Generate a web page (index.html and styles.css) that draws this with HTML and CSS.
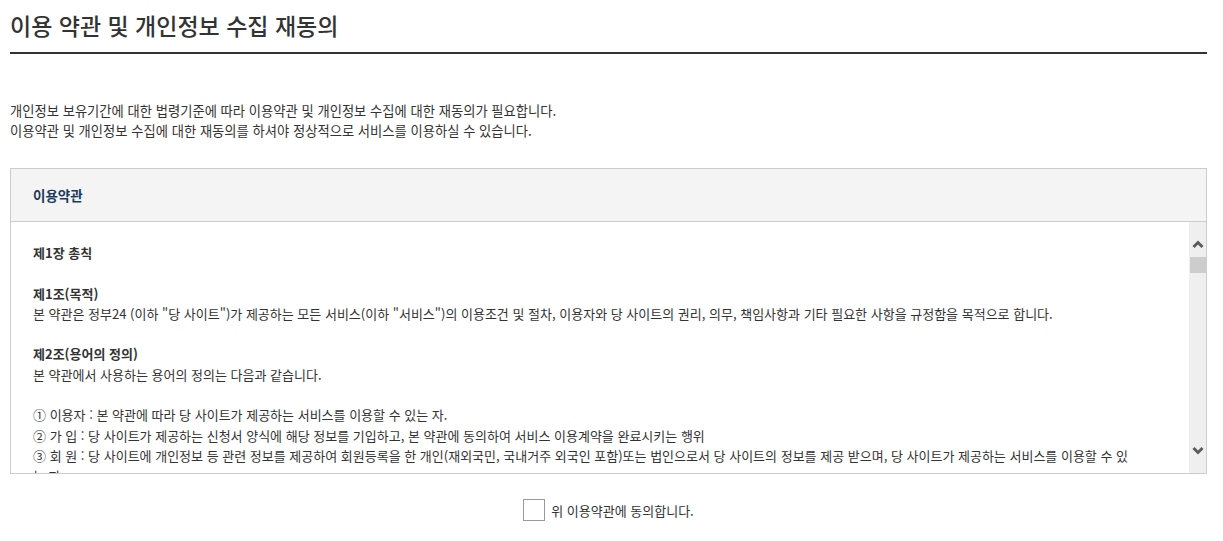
FILE: index.html
```html
<!DOCTYPE html>
<html lang="ko">
<head>
  <meta charset="UTF-8" />
  <meta name="viewport" content="width=device-width, initial-scale=1.0"/>
  <title>이용 약관 및 개인정보 수집 재동의</title>
  <link rel="stylesheet" href="styles.css">
</head>
<body>
  <div class="container">
    <h1 class="page-title">이용 약관 및 개인정보 수집 재동의</h1>

    <p class="intro">
      개인정보 보유기간에 대한 법령기준에 따라 이용약관 및 개인정보 수집에 대한 재동의가 필요합니다.<br>
      이용약관 및 개인정보 수집에 대한 재동의를 하셔야 정상적으로 서비스를 이용하실 수 있습니다.
    </p>

    <div class="terms-box">
      <div class="terms-head">이용약관</div>
      <div class="terms-body">
        <div class="terms-text">
          <p><strong>제1장 총칙</strong></p>
          <p>
            <strong>제1조(목적)</strong><br>
            본 약관은 정부24 (이하 "당 사이트")가 제공하는 모든 서비스(이하 "서비스")의 이용조건 및 절차, 이용자와 당 사이트의 권리, 의무, 책임사항과 기타 필요한 사항을 규정함을 목적으로 합니다.
          </p>
          <p>
            <strong>제2조(용어의 정의)</strong><br>
            본 약관에서 사용하는 용어의 정의는 다음과 같습니다.
          </p>
          <p>
            ① 이용자 : 본 약관에 따라 당 사이트가 제공하는 서비스를 이용할 수 있는 자.<br>
            ② 가 입 : 당 사이트가 제공하는 신청서 양식에 해당 정보를 기입하고, 본 약관에 동의하여 서비스 이용계약을 완료시키는 행위<br>
            ③ 회 원 : 당 사이트에 개인정보 등 관련 정보를 제공하여 회원등록을 한 개인(재외국민, 국내거주 외국인 포함)또는 법인으로서 당 사이트의 정보를 제공 받으며, 당 사이트가 제공하는 서비스를 이용할 수 있는 자.<br>
            ④ 비밀번호 : 이용자와 회원ID가 일치하는지를 확인하고 통신상의 자신의 비밀보호를 위하여 이용자 자신이 선정한 문자와 숫자의 조합.
          </p>
        </div>
        <div class="scrollbar">
          <svg class="scroll-arrow" width="12" height="10" viewBox="0 0 12 10"><polyline points="1.5,8 6,3.5 10.5,8" fill="none" stroke="#5c5c5c" stroke-width="3"/></svg>
          <div class="scroll-thumb"></div>
          <div class="scroll-track"></div>
          <svg class="scroll-arrow" width="12" height="10" viewBox="0 0 12 10"><polyline points="1.5,2 6,6.5 10.5,2" fill="none" stroke="#5c5c5c" stroke-width="3"/></svg>
        </div>
      </div>
    </div>

    <div class="agree">
      <input type="checkbox" id="agreeTerms" name="agreeTerms"/>
      <label for="agreeTerms">위 이용약관에 동의합니다.</label>
    </div>
  </div>
</body>
</html>
```

FILE: styles.css
```css
html, body {
  margin: 0;
  padding: 0;
  font-family: "Noto Sans CJK KR", "Noto Sans", sans-serif;
  color: #333;
  background-color: #ffffff;
}

.container {
  padding: 0 16px 0 10px;
}

.page-title {
  margin: 0;
  padding: 8px 0 10px;
  font-size: 23px;
  line-height: 34px;
  font-weight: 500;
  color: #333;
  border-bottom: 2px solid #333;
}

.intro {
  margin: 47px 0 27px;
  font-size: 13.3px;
  line-height: 20px;
}

.terms-box {
  border: 1px solid #cccccc;
}

.terms-head {
  height: 52px;
  line-height: 52px;
  padding-left: 22px;
  background-color: #f4f4f4;
  border-bottom: 1px solid #cccccc;
  font-size: 13.5px;
  font-weight: bold;
  color: #1d3a5c;
}

.terms-body {
  display: flex;
  height: 251px;
}

.terms-text {
  flex: 1;
  overflow: hidden;
  padding: 21px 52px 0 22px;
  font-size: 13px;
  line-height: 20.3px;
}

.terms-text p {
  margin: 0 0 20.3px;
}

.terms-text strong {
  font-weight: bold;
}

.scrollbar {
  width: 17px;
  background-color: #efefef;
  display: flex;
  flex-direction: column;
  align-items: center;
  padding: 17px 0;
  box-sizing: border-box;
}

.scroll-arrow {
  display: block;
  flex: none;
}

.scroll-thumb {
  width: 16px;
  height: 16px;
  margin-top: 8px;
  background-color: #cdcdcd;
}

.scroll-track {
  flex: 1;
}

.agree {
  display: flex;
  justify-content: center;
  align-items: center;
  margin-top: 25px;
  font-size: 13px;
}

.agree input {
  appearance: none;
  -webkit-appearance: none;
  width: 22px;
  height: 22px;
  margin: 0 6px 0 0;
  border: 1px solid #999;
  background: #fff;
  box-sizing: border-box;
}
```
